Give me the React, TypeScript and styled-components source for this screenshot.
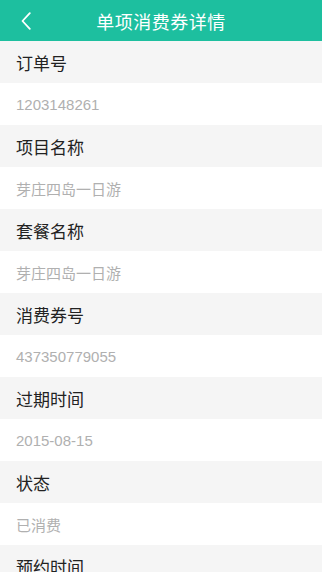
import React from 'react';
import styled, { createGlobalStyle } from 'styled-components';

const GlobalStyle = createGlobalStyle`
  html, body {
    margin: 0;
    padding: 0;
    background: #ffffff;
    font-family: "Liberation Sans", "Noto Sans CJK SC", sans-serif;
  }
`;

const Page = styled.div`
  width: 322px;
  height: 572px;
  overflow: hidden;
  display: flex;
  flex-direction: column;
`;

const Header = styled.header`
  height: 41px;
  flex-shrink: 0;
  background: #1dbf9f;
  display: grid;
  grid-template-columns: 60px 1fr 60px;
  align-items: center;
`;

const BackButton = styled.button`
  border: none;
  background: none;
  padding: 0 0 0 21px;
  height: 41px;
  display: flex;
  align-items: center;
  cursor: pointer;
`;

const Title = styled.h1`
  margin: 0;
  text-align: center;
  color: #ffffff;
  font-size: 18px;
  font-weight: 400;
  letter-spacing: 0.5px;
`;

const LabelRow = styled.div`
  height: 42px;
  flex-shrink: 0;
  background: #f5f5f5;
  display: flex;
  align-items: center;
  padding-left: 16px;
  font-size: 17px;
  color: #222222;
`;

const ValueRow = styled.div`
  height: 42px;
  flex-shrink: 0;
  background: #ffffff;
  display: flex;
  align-items: center;
  padding-left: 16px;
  font-size: 15px;
  color: #b0b0b0;
`;

const fields = [
  { label: '订单号', value: '1203148261' },
  { label: '项目名称', value: '芽庄四岛一日游' },
  { label: '套餐名称', value: '芽庄四岛一日游' },
  { label: '消费券号', value: '437350779055' },
  { label: '过期时间', value: '2015-08-15' },
  { label: '状态', value: '已消费' },
  { label: '预约时间', value: '2015-08-10' },
];

const App: React.FC = () => (
  <>
    <GlobalStyle />
    <Page>
      <Header>
        <BackButton aria-label="返回">
          <svg width="10" height="18" viewBox="0 0 10 18" fill="none">
            <path d="M8.8 1.2 L1.5 9 L8.8 16.8" stroke="#ffffff" strokeWidth="1.8" strokeLinecap="round" strokeLinejoin="round" />
          </svg>
        </BackButton>
        <Title>单项消费券详情</Title>
        <span />
      </Header>
      {fields.map((f) => (
        <React.Fragment key={f.label}>
          <LabelRow>{f.label}</LabelRow>
          <ValueRow>{f.value}</ValueRow>
        </React.Fragment>
      ))}
    </Page>
  </>
);

export default App;
